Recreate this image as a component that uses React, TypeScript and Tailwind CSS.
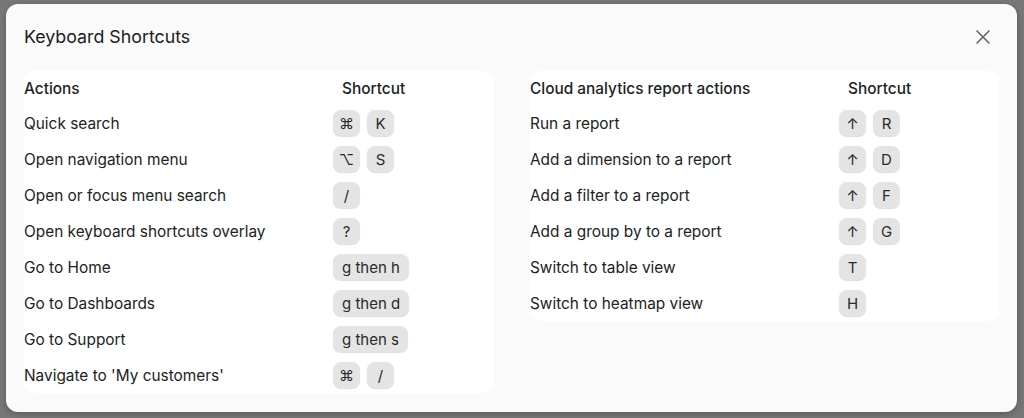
import React from "react";

type Row = { label: string; keys: string[] };

const general: Row[] = [
  { label: "Quick search", keys: ["⌘", "K"] },
  { label: "Open navigation menu", keys: ["⌥", "S"] },
  { label: "Open or focus menu search", keys: ["/"] },
  { label: "Open keyboard shortcuts overlay", keys: ["?"] },
  { label: "Go to Home", keys: ["g then h"] },
  { label: "Go to Dashboards", keys: ["g then d"] },
  { label: "Go to Support", keys: ["g then s"] },
  { label: "Navigate to 'My customers'", keys: ["⌘", "/"] },
];

const reports: Row[] = [
  { label: "Run a report", keys: ["↑", "R"] },
  { label: "Add a dimension to a report", keys: ["↑", "D"] },
  { label: "Add a filter to a report", keys: ["↑", "F"] },
  { label: "Add a group by to a report", keys: ["↑", "G"] },
  { label: "Switch to table view", keys: ["T"] },
  { label: "Switch to heatmap view", keys: ["H"] },
];

function Key({ k }: { k: string }) {
  const single = k.length === 1;
  return (
    <kbd
      className={
        "flex h-[26px] items-center justify-center rounded-[8px] bg-[#e4e4e4] text-[15px] leading-none text-[#2a2a2a] shadow-[0_1px_1px_rgba(0,0,0,0.14)] [font-family:Inter,'Noto_Sans',sans-serif] " +
        (single ? "w-[27px]" : "px-[9px]")
      }
    >
      {k}
    </kbd>
  );
}

function ShortcutTable({ title, rows }: { title: string; rows: Row[] }) {
  return (
    <div className="w-[469px] self-start rounded-[10px] bg-white">
      <div className="flex h-[34px] items-center pt-[1px] text-[15.4px] font-medium text-[#1e1e1e]">
        <div className="w-[309px]">{title}</div>
        <div className="pl-[9px]">Shortcut</div>
      </div>
      {rows.map((r) => (
        <div key={r.label} className="flex h-[36px] items-center text-[15.4px] text-[#222]">
          <div className="w-[309px] pt-[1px]">{r.label}</div>
          <div className="flex gap-[7px]">
            {r.keys.map((k, i) => (
              <Key key={i} k={k} />
            ))}
          </div>
        </div>
      ))}
    </div>
  );
}

export default function App() {
  return (
    <div className="h-[418px] w-[1024px] overflow-hidden bg-[#777777] pl-[6px] pt-[4px] [font-family:Inter,'Noto_Sans',sans-serif]">
      <div className="flex h-[408px] w-[1011px] flex-col rounded-[12px] bg-[#fafafa] px-[18px] pt-[21px] shadow-[0_2px_6px_rgba(0,0,0,0.25)]">
        <div className="flex h-[24px] items-center justify-between">
          <h2 className="text-[17.8px] font-normal text-[#1c1c1c]">Keyboard Shortcuts</h2>
          <button className="mr-[6px] flex h-[20px] w-[20px] items-center justify-center text-[#666]" aria-label="Close">
            <svg width="14" height="14" viewBox="0 0 14 14" fill="none" stroke="currentColor" strokeWidth="1.6" strokeLinecap="round">
              <path d="M1 1L13 13M13 1L1 13" />
            </svg>
          </button>
        </div>
        <div className="mt-[22px] flex gap-[37px]">
          <ShortcutTable title="Actions" rows={general} />
          <ShortcutTable title="Cloud analytics report actions" rows={reports} />
        </div>
      </div>
    </div>
  );
}
